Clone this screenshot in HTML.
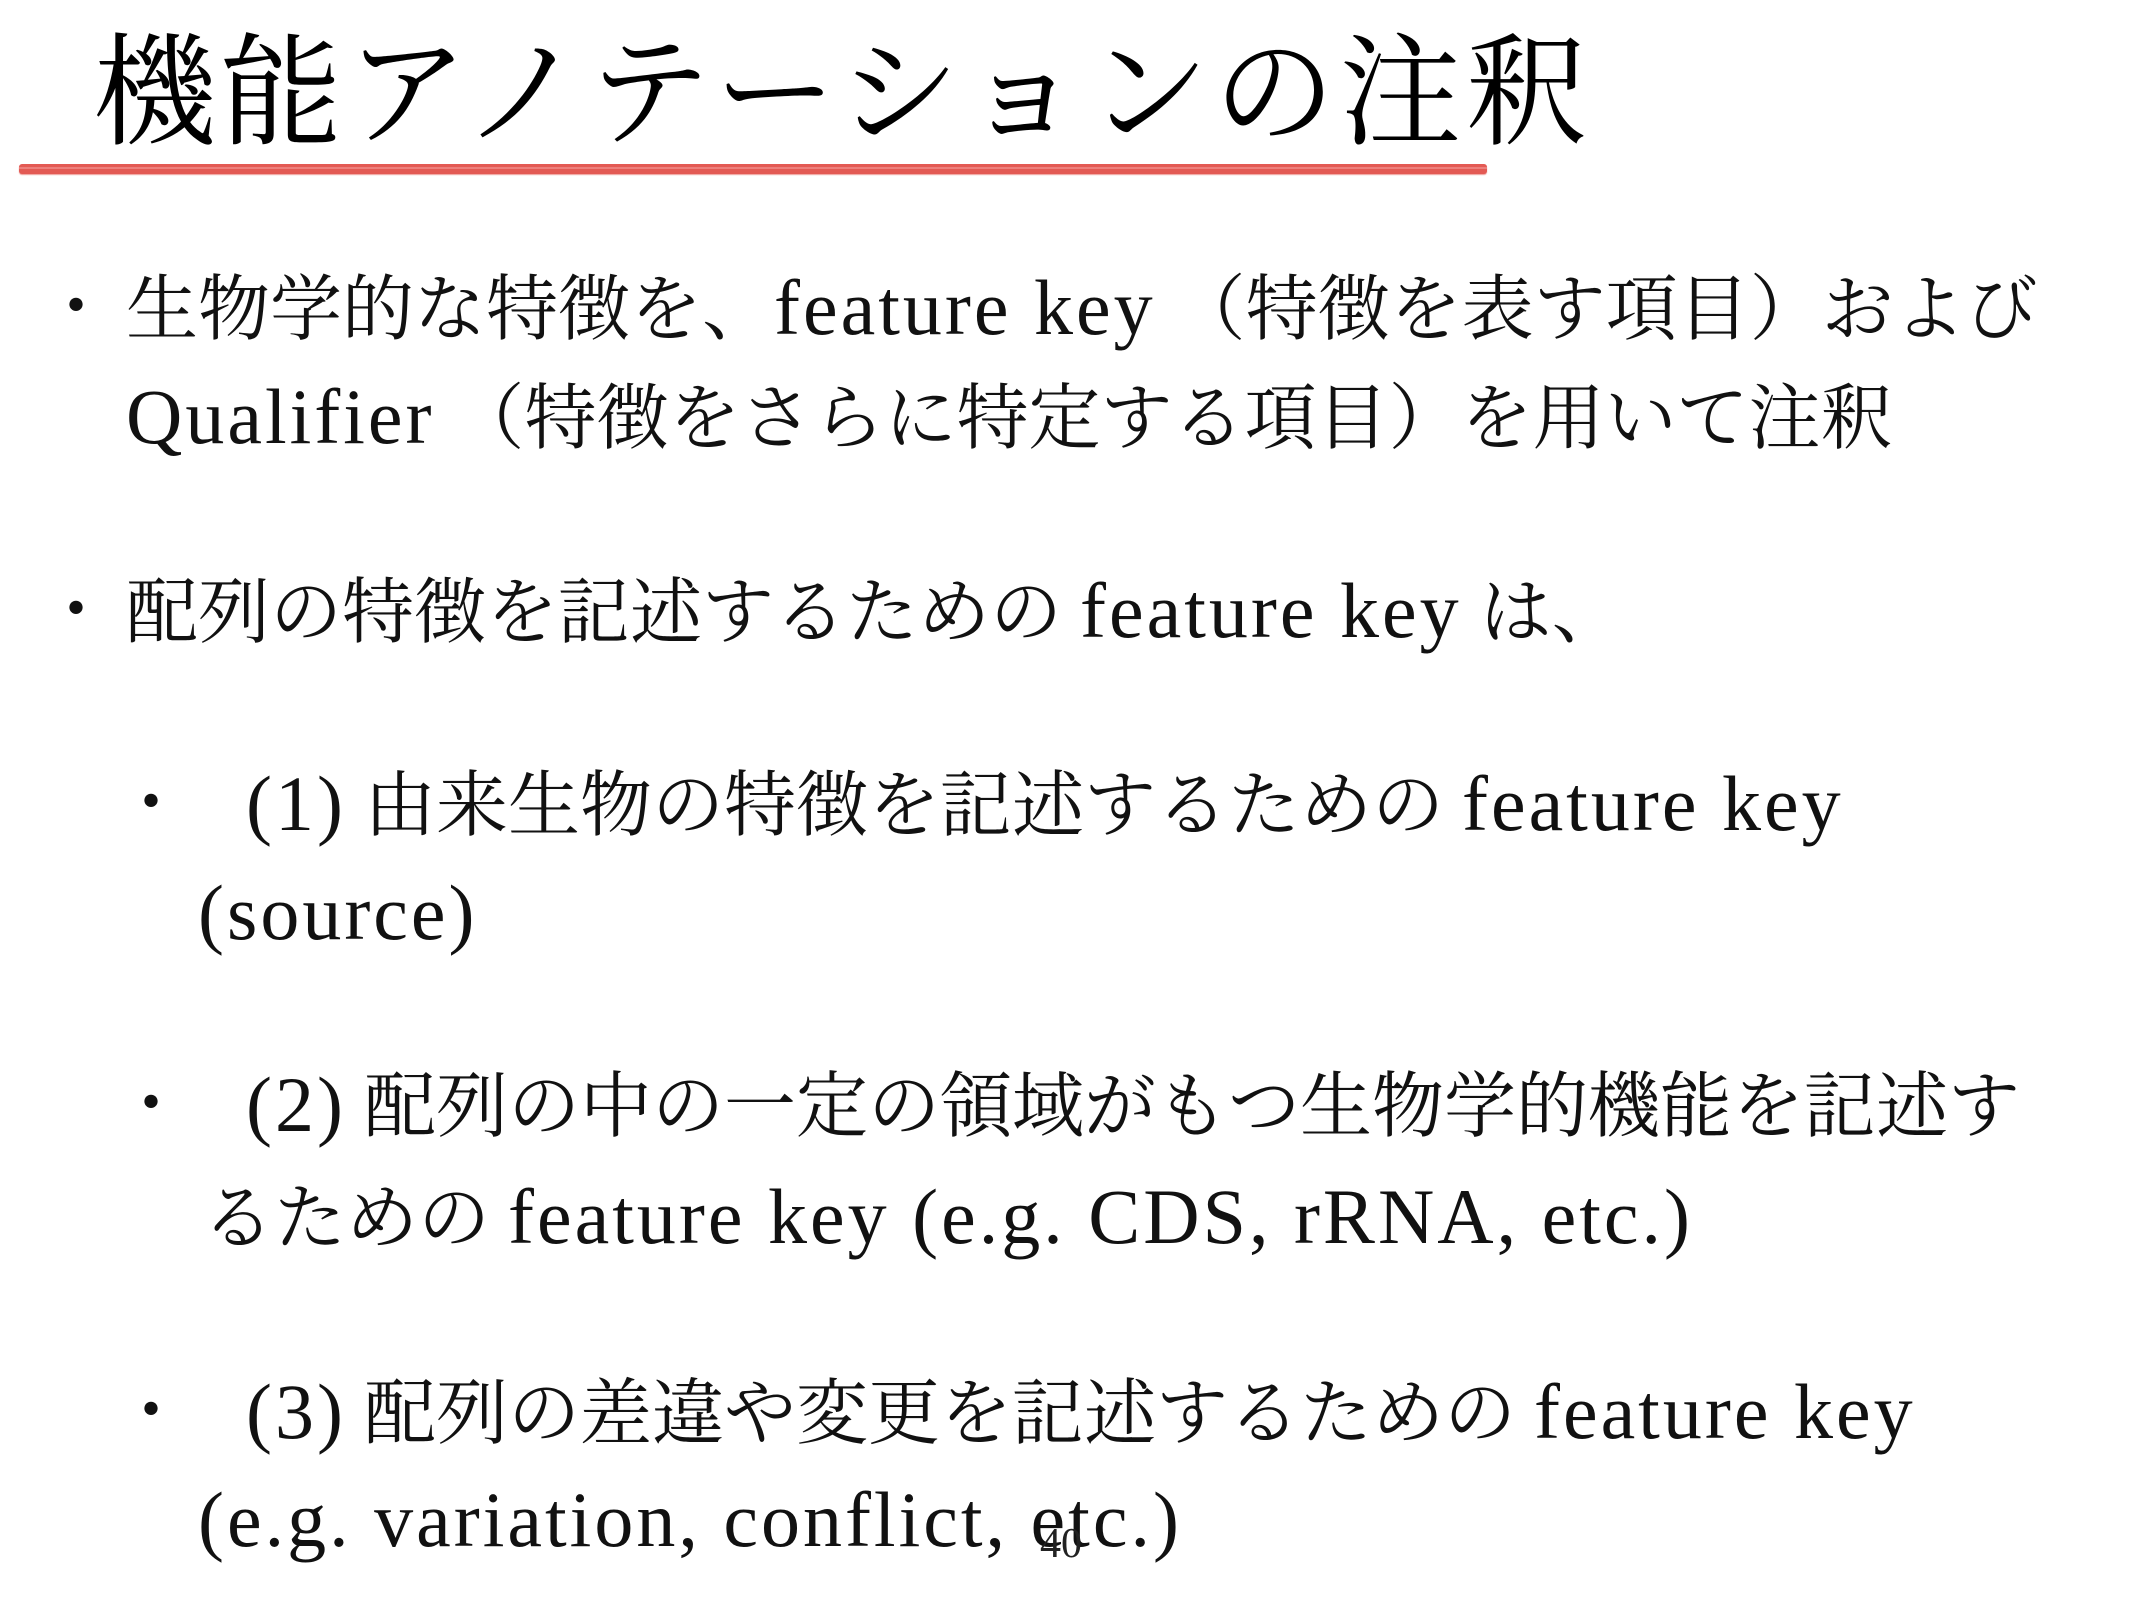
<!DOCTYPE html>
<html><head><meta charset="utf-8">
<style>
html,body{margin:0;padding:0;background:#fff;}
body{width:2133px;height:1600px;position:relative;overflow:hidden;
font-family:"Liberation Serif","Noto Serif CJK JP","Noto Serif CJK SC",serif;color:#111;}
.t{position:absolute;white-space:nowrap;font-size:72px;line-height:100px;}
.l{font-size:78px;letter-spacing:3px;}
.title{position:absolute;left:94px;top:20px;font-size:122px;line-height:150px;letter-spacing:4px;white-space:nowrap;color:#000;}
.rule{position:absolute;left:19px;top:164px;width:1468px;height:10px;background:#e35a54;border-radius:3px;
box-shadow:0 1px 1px rgba(227,90,84,.6);}
.rule:before{content:"";position:absolute;left:0;right:0;top:3px;height:2px;background:rgba(255,200,200,.35);}
.dot{position:absolute;font-size:72px;line-height:100px;}
.pn{position:absolute;left:1040px;top:1522px;font-size:42px;line-height:44px;color:#222;font-family:"Liberation Serif",serif;}
</style></head><body>
<div class="title">機能アノテーションの注釈</div>
<div class="rule"></div>

<div class="dot" style="left:40px;top:258px">・</div>
<div class="t" style="left:126px;top:258px">生物学的な特徴を、<span class="l">feature key</span> （特徴を表す項目）および</div>
<div class="t" style="left:126px;top:367px"><span class="l">Qualifier</span> （特徴をさらに特定する項目）を用いて注釈</div>

<div class="dot" style="left:40px;top:561px">・</div>
<div class="t" style="left:126px;top:561px">配列の特徴を記述するための <span class="l">feature key</span> は、</div>

<div class="dot" style="left:115px;top:754px">・</div>
<div class="t" style="left:246px;top:754px"><span class="l">(1)</span> 由来生物の特徴を記述するための <span class="l">feature key</span></div>
<div class="t" style="left:198px;top:863px"><span class="l">(source)</span></div>

<div class="dot" style="left:115px;top:1055px">・</div>
<div class="t" style="left:246px;top:1055px"><span class="l">(2)</span> 配列の中の一定の領域がもつ生物学的機能を記述す</div>
<div class="t" style="left:202px;top:1167px">るための <span class="l">feature key (e.g. CDS, rRNA, etc.)</span></div>

<div class="dot" style="left:115px;top:1362px">・</div>
<div class="t" style="left:246px;top:1362px"><span class="l">(3)</span> 配列の差違や変更を記述するための <span class="l">feature key</span></div>
<div class="t" style="left:198px;top:1470px"><span class="l">(e.g. variation, conflict, etc.)</span></div>

<div class="pn">40</div>
</body></html>
